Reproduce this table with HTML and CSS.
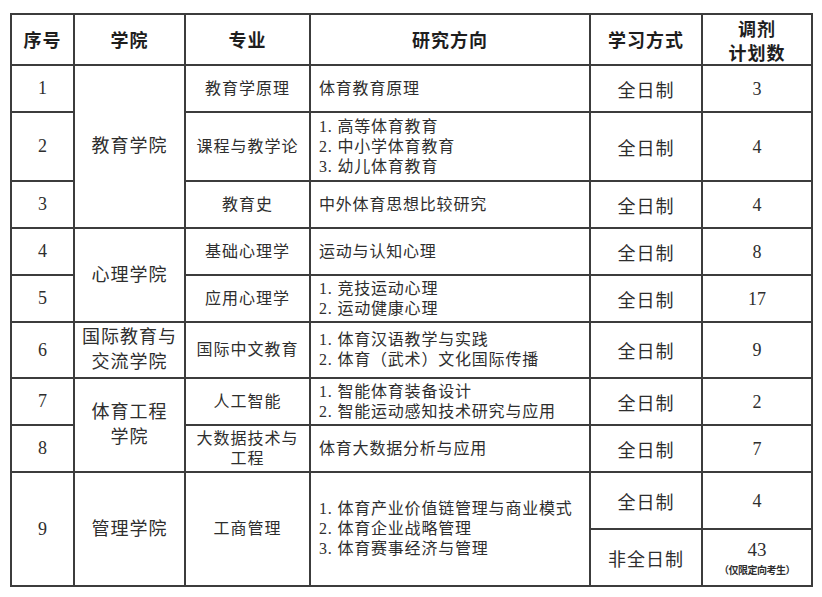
FILE: index.html
```html
<!DOCTYPE html>
<html lang="zh-CN">
<head>
<meta charset="utf-8">
<link rel="stylesheet" href="styles.css">
</head>
<body>
<table class="plan">
  <colgroup>
    <col class="c-no"><col class="c-col"><col class="c-major"><col class="c-dir"><col class="c-mode"><col class="c-num">
  </colgroup>
  <thead>
    <tr class="h-head">
      <th>序号</th><th>学院</th><th>专业</th><th>研究方向</th><th>学习方式</th><th class="two"><span class="hl">调剂</span><span class="hl">计划数</span></th>
    </tr>
  </thead>
  <tbody>
    <tr class="h47">
      <td class="no">1</td>
      <td class="college" rowspan="3">教育学院</td>
      <td class="major">教育学原理</td>
      <td class="dir">体育教育原理</td>
      <td class="mode">全日制</td>
      <td class="num">3</td>
    </tr>
    <tr class="h69">
      <td class="no">2</td>
      <td class="major">课程与教学论</td>
      <td class="dir">1. 高等体育教育<br>2. 中小学体育教育<br>3. 幼儿体育教育</td>
      <td class="mode">全日制</td>
      <td class="num">4</td>
    </tr>
    <tr class="h47">
      <td class="no">3</td>
      <td class="major">教育史</td>
      <td class="dir">中外体育思想比较研究</td>
      <td class="mode">全日制</td>
      <td class="num">4</td>
    </tr>
    <tr class="h47">
      <td class="no">4</td>
      <td class="college" rowspan="2">心理学院</td>
      <td class="major">基础心理学</td>
      <td class="dir">运动与认知心理</td>
      <td class="mode">全日制</td>
      <td class="num">8</td>
    </tr>
    <tr class="h47">
      <td class="no">5</td>
      <td class="major">应用心理学</td>
      <td class="dir">1. 竞技运动心理<br>2. 运动健康心理</td>
      <td class="mode">全日制</td>
      <td class="num">17</td>
    </tr>
    <tr class="h56">
      <td class="no">6</td>
      <td class="college">国际教育与<br>交流学院</td>
      <td class="major">国际中文教育</td>
      <td class="dir">1. 体育汉语教学与实践<br>2. 体育（武术）文化国际传播</td>
      <td class="mode">全日制</td>
      <td class="num">9</td>
    </tr>
    <tr class="h47">
      <td class="no">7</td>
      <td class="college" rowspan="2">体育工程<br>学院</td>
      <td class="major">人工智能</td>
      <td class="dir">1. 智能体育装备设计<br>2. 智能运动感知技术研究与应用</td>
      <td class="mode">全日制</td>
      <td class="num">2</td>
    </tr>
    <tr class="h47">
      <td class="no">8</td>
      <td class="major">大数据技术与<br>工程</td>
      <td class="dir">体育大数据分析与应用</td>
      <td class="mode">全日制</td>
      <td class="num">7</td>
    </tr>
    <tr class="h57">
      <td class="no" rowspan="2">9</td>
      <td class="college" rowspan="2">管理学院</td>
      <td class="major" rowspan="2">工商管理</td>
      <td class="dir" rowspan="2">1. 体育产业价值链管理与商业模式<br>2. 体育企业战略管理<br>3. 体育赛事经济与管理</td>
      <td class="mode">全日制</td>
      <td class="num">4</td>
    </tr>
    <tr class="h57">
      <td class="mode">非全日制</td>
      <td class="num"><span class="big">43</span><span class="note">（仅限定向考生）</span></td>
    </tr>
  </tbody>
</table>
</body>
</html>
```

FILE: styles.css
```css
html, body {
  margin: 0;
  padding: 0;
  background: #ffffff;
}

.plan {
  margin: 13px 0 0 10px;
  width: 801px;
  border-collapse: collapse;
  table-layout: fixed;
  font-family: "Liberation Serif", "Noto Sans CJK SC", serif;
  color: #2e2e2e;
}

.c-no { width: 63px; }
.c-col { width: 111px; }
.c-major { width: 125px; }
.c-dir { width: 280px; }
.c-mode { width: 112px; }
.c-num { width: 110px; }

.plan th,
.plan td {
  border: 2px solid #3c3c3c;
  padding: 0;
  text-align: center;
  vertical-align: middle;
}

.plan th {
  font-family: "Noto Sans CJK SC", sans-serif;
  font-weight: 700;
  font-size: 18px;
  letter-spacing: 1px;
  color: #1e1e1e;
  line-height: 23px;
}

.hl {
  display: block;
  line-height: 24px;
}

.h-head { height: 51px; }
.h47 { height: 47px; }
.h56 { height: 56px; }
.h57 { height: 57px; }
.h69 { height: 69px; }

.no {
  font-size: 18px;
}

.college {
  font-size: 18px;
  letter-spacing: 1px;
  line-height: 25px;
}

.major {
  font-size: 16px;
  letter-spacing: 1px;
  line-height: 20px;
}

.dir {
  text-align: left !important;
  padding-left: 8px !important;
  font-size: 16px;
  letter-spacing: 0.8px;
  line-height: 20px;
}

.mode {
  font-size: 18px;
  letter-spacing: 1px;
}

.num {
  font-size: 18px;
  line-height: 22px;
}

.big {
  display: block;
  font-size: 19px;
  line-height: 24px;
}

.note {
  display: block;
  font-family: "Noto Sans CJK SC", sans-serif;
  font-size: 10px;
  font-weight: 700;
  line-height: 16px;
  letter-spacing: -0.5px;
}
```
